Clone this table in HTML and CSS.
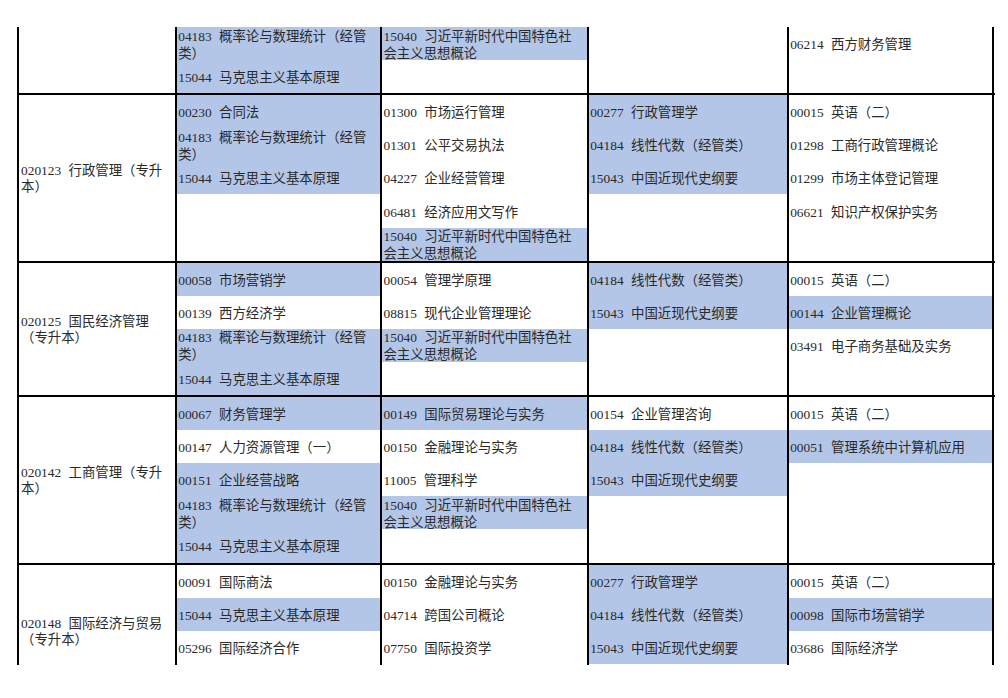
FILE: index.html
```html
<!DOCTYPE html>
<html lang="zh-CN">
<head>
<meta charset="utf-8">
<title>专升本课程设置</title>
<link rel="stylesheet" href="styles.css">
</head>
<body>
<div class="view">
  <div class="sec first">
    <div class="cell name"></div>
    <div class="cell">
      <div class="it h"><span><span class="c">04183</span> 概率论与数理统计（经管<br>类）</span></div>
      <div class="it h"><span><span class="c">15044</span> 马克思主义基本原理</span></div>
    </div>
    <div class="cell">
      <div class="it h"><span><span class="c">15040</span> 习近平新时代中国特色社<br>会主义思想概论</span></div>
    </div>
    <div class="cell"></div>
    <div class="cell last">
      <div class="it"><span><span class="c">06214</span> 西方财务管理</span></div>
    </div>
  </div>

  <div class="sec">
    <div class="cell name"><span><span class="c">020123</span> 行政管理（专升<br>本）</span></div>
    <div class="cell">
      <div class="it h"><span><span class="c">00230</span> 合同法</span></div>
      <div class="it h"><span><span class="c">04183</span> 概率论与数理统计（经管<br>类）</span></div>
      <div class="it h"><span><span class="c">15044</span> 马克思主义基本原理</span></div>
    </div>
    <div class="cell">
      <div class="it"><span><span class="c">01300</span> 市场运行管理</span></div>
      <div class="it"><span><span class="c">01301</span> 公平交易执法</span></div>
      <div class="it"><span><span class="c">04227</span> 企业经营管理</span></div>
      <div class="it"><span><span class="c">06481</span> 经济应用文写作</span></div>
      <div class="it h"><span><span class="c">15040</span> 习近平新时代中国特色社<br>会主义思想概论</span></div>
    </div>
    <div class="cell">
      <div class="it h"><span><span class="c">00277</span> 行政管理学</span></div>
      <div class="it h"><span><span class="c">04184</span> 线性代数（经管类）</span></div>
      <div class="it h"><span><span class="c">15043</span> 中国近现代史纲要</span></div>
    </div>
    <div class="cell last">
      <div class="it"><span><span class="c">00015</span> 英语（二）</span></div>
      <div class="it"><span><span class="c">01298</span> 工商行政管理概论</span></div>
      <div class="it"><span><span class="c">01299</span> 市场主体登记管理</span></div>
      <div class="it"><span><span class="c">06621</span> 知识产权保护实务</span></div>
    </div>
  </div>

  <div class="sec">
    <div class="cell name"><span><span class="c">020125</span> 国民经济管理<br>（专升本）</span></div>
    <div class="cell">
      <div class="it h"><span><span class="c">00058</span> 市场营销学</span></div>
      <div class="it"><span><span class="c">00139</span> 西方经济学</span></div>
      <div class="it h"><span><span class="c">04183</span> 概率论与数理统计（经管<br>类）</span></div>
      <div class="it h"><span><span class="c">15044</span> 马克思主义基本原理</span></div>
    </div>
    <div class="cell">
      <div class="it"><span><span class="c">00054</span> 管理学原理</span></div>
      <div class="it"><span><span class="c">08815</span> 现代企业管理理论</span></div>
      <div class="it h"><span><span class="c">15040</span> 习近平新时代中国特色社<br>会主义思想概论</span></div>
    </div>
    <div class="cell">
      <div class="it h"><span><span class="c">04184</span> 线性代数（经管类）</span></div>
      <div class="it h"><span><span class="c">15043</span> 中国近现代史纲要</span></div>
    </div>
    <div class="cell last">
      <div class="it"><span><span class="c">00015</span> 英语（二）</span></div>
      <div class="it h"><span><span class="c">00144</span> 企业管理概论</span></div>
      <div class="it"><span><span class="c">03491</span> 电子商务基础及实务</span></div>
    </div>
  </div>

  <div class="sec">
    <div class="cell name"><span><span class="c">020142</span> 工商管理（专升<br>本）</span></div>
    <div class="cell">
      <div class="it h"><span><span class="c">00067</span> 财务管理学</span></div>
      <div class="it"><span><span class="c">00147</span> 人力资源管理（一）</span></div>
      <div class="it h"><span><span class="c">00151</span> 企业经营战略</span></div>
      <div class="it h"><span><span class="c">04183</span> 概率论与数理统计（经管<br>类）</span></div>
      <div class="it h"><span><span class="c">15044</span> 马克思主义基本原理</span></div>
    </div>
    <div class="cell">
      <div class="it h"><span><span class="c">00149</span> 国际贸易理论与实务</span></div>
      <div class="it"><span><span class="c">00150</span> 金融理论与实务</span></div>
      <div class="it"><span><span class="c">11005</span> 管理科学</span></div>
      <div class="it h"><span><span class="c">15040</span> 习近平新时代中国特色社<br>会主义思想概论</span></div>
    </div>
    <div class="cell">
      <div class="it"><span><span class="c">00154</span> 企业管理咨询</span></div>
      <div class="it h"><span><span class="c">04184</span> 线性代数（经管类）</span></div>
      <div class="it h"><span><span class="c">15043</span> 中国近现代史纲要</span></div>
    </div>
    <div class="cell last">
      <div class="it"><span><span class="c">00015</span> 英语（二）</span></div>
      <div class="it h"><span><span class="c">00051</span> 管理系统中计算机应用</span></div>
    </div>
  </div>

  <div class="sec">
    <div class="cell name"><span><span class="c">020148</span> 国际经济与贸易<br>（专升本）</span></div>
    <div class="cell">
      <div class="it"><span><span class="c">00091</span> 国际商法</span></div>
      <div class="it h"><span><span class="c">15044</span> 马克思主义基本原理</span></div>
      <div class="it"><span><span class="c">05296</span> 国际经济合作</span></div>
      <div class="it"></div>
    </div>
    <div class="cell">
      <div class="it"><span><span class="c">00150</span> 金融理论与实务</span></div>
      <div class="it"><span><span class="c">04714</span> 跨国公司概论</span></div>
      <div class="it"><span><span class="c">07750</span> 国际投资学</span></div>
    </div>
    <div class="cell">
      <div class="it h"><span><span class="c">00277</span> 行政管理学</span></div>
      <div class="it h"><span><span class="c">04184</span> 线性代数（经管类）</span></div>
      <div class="it h"><span><span class="c">15043</span> 中国近现代史纲要</span></div>
    </div>
    <div class="cell last">
      <div class="it"><span><span class="c">00015</span> 英语（二）</span></div>
      <div class="it h"><span><span class="c">00098</span> 国际市场营销学</span></div>
      <div class="it"><span><span class="c">03686</span> 国际经济学</span></div>
    </div>
  </div>
</div>
</body>
</html>
```

FILE: styles.css
```css
html, body {
  margin: 0;
  padding: 0;
  background: #fff;
}

body {
  font-family: "Liberation Serif", "Noto Sans CJK SC", serif;
  font-size: 13.4px;
  color: #2a2a2a;
}

.view {
  margin: 26px 0 0 17px;
  height: 639px;
  overflow: hidden;
  width: 978px;
}

.sec {
  display: grid;
  grid-template-columns: 157.7px 205.3px 206.7px 200px 207.6px;
  border-top: 2px solid #000;
}

.sec.first {
  border-top: none;
  padding-top: 1px;
}

.cell {
  box-sizing: border-box;
  border-left: 2px solid #000;
  display: flex;
  flex-direction: column;
  min-width: 0;
}

.cell.last {
  border-right: 2px solid #000;
}

.cell.name {
  justify-content: center;
  padding: 3px 0 0 2px;
  line-height: 16px;
  white-space: nowrap;
}

.it {
  box-sizing: border-box;
  height: 33.1px;
  flex: none;
  display: flex;
  align-items: center;
  padding: 2px 0 0 1.5px;
  line-height: 17px;
  white-space: nowrap;
}

.it.h {
  background: #b4c6e7;
}

.c {
  font-size: 13.4px;
  margin-right: 4px;
}
```
